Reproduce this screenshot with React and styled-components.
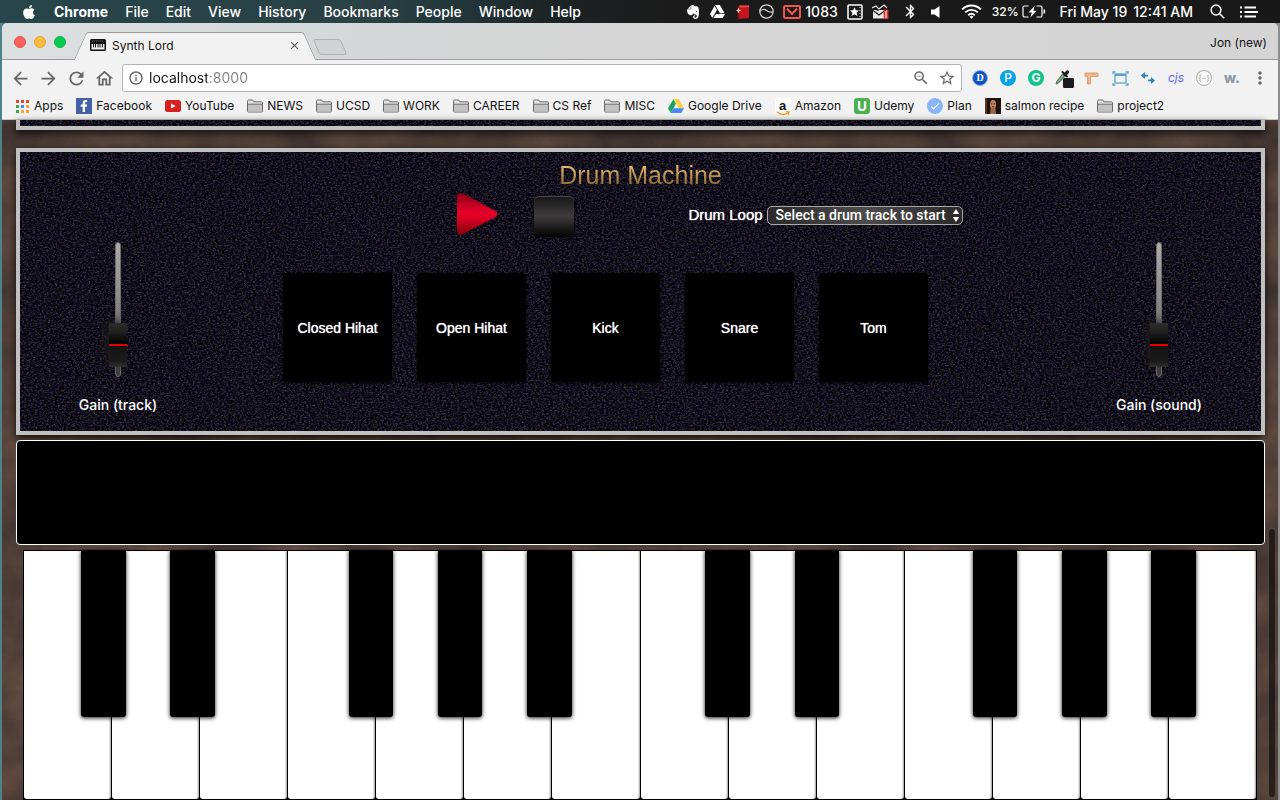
import React, { useState } from "react";
import styled, { createGlobalStyle, css } from "styled-components";
import { FaApple, FaEvernote, FaGoogleDrive, FaFacebookF } from "react-icons/fa";
import {
  MdArrowBack,
  MdArrowForward,
  MdRefresh,
  MdOutlineHome,
  MdInfoOutline,
  MdStarBorder,
  MdZoomOut,
  MdMoreVert,
  MdBluetooth,
  MdClose,
  MdCheck,
} from "react-icons/md";

const UI = `Inter, "Liberation Sans", sans-serif`;
const HELV = `"Liberation Sans", Arial, sans-serif`;

const svgUrl = (body, w, h) =>
  `url("data:image/svg+xml,${encodeURIComponent(
    `<svg xmlns='http://www.w3.org/2000/svg' width='${w}' height='${h}'>${body}</svg>`
  )}")`;

const leather = svgUrl(
  `<filter id='n' x='0' y='0' width='100%' height='100%' color-interpolation-filters='sRGB'><feTurbulence type='fractalNoise' baseFrequency='0.45 0.6' numOctaves='4' seed='4' stitchTiles='stitch'/><feColorMatrix values='0.5 0.2 0 0 -0.28  0.5 0.1 0 0 -0.245  0.5 0 0.3 0 -0.29  0 0 0 0 1'/></filter><rect width='600' height='300' filter='url(#n)'/>`,
  600,
  300
);

const wood = svgUrl(
  `<filter id='n' x='0' y='0' width='100%' height='100%' color-interpolation-filters='sRGB'><feTurbulence type='fractalNoise' baseFrequency='0.015 0.02' numOctaves='7' seed='9' stitchTiles='stitch'/><feColorMatrix values='0.24 0 0 0 0.2  0.16 0 0 0 0.17  0.1 0 0 0 0.17  0 0 0 0 1'/></filter><rect width='640' height='680' filter='url(#n)'/>`,
  640,
  680
);

const GlobalStyle = createGlobalStyle`
  * { box-sizing: border-box; }
  body { margin: 0; background: #4d7f85; font-family: ${UI}; }
  button { font: inherit; color: inherit; border: 0; padding: 0; background: none; }
  a { color: inherit; text-decoration: none; }
  svg { display: block; flex: none; }
`;

const Desktop = styled.div`
  min-height: 100vh;
  display: flex;
  flex-direction: column;
  background: linear-gradient(90deg, #4d8289 50%, #8d8d8d 50%);
`;

/* ---------- menu bar ---------- */
const MenuBar = styled.header`
  height: 23px;
  display: flex;
  justify-content: space-between;
  align-items: center;
  padding: 0 22px 0 21px;
  color: #fff;
  font-size: 14px;
  font-weight: 500;
  white-space: nowrap;
  background: linear-gradient(90deg, #27454a 0%, #2a4145 28%, #22363a 36%, #1c2425 43%, #1b1b1b 52%, #181818 100%);
`;
const MenuList = styled.nav`
  display: flex;
  align-items: center;
  gap: 17px;
`;
const MenuItem = styled.button`
  font-weight: ${(p) => (p.$strong ? 700 : 500)};
`;
const StatusList = styled.div`
  display: flex;
  align-items: center;
`;
const Status = styled.span`
  display: flex;
  align-items: center;
  gap: ${(p) => p.$gap || 4}px;
  margin-left: ${(p) => p.$space}px;
  font-size: ${(p) => (p.$small ? 12 : 14)}px;
`;

/* ---------- browser chrome ---------- */
const Window = styled.div`
  flex: 1;
  margin: 0 2px;
  display: flex;
  flex-direction: column;
  border-radius: 5px 5px 0 0;
  overflow: hidden;
`;
const TabStrip = styled.div`
  height: 37px;
  display: flex;
  align-items: flex-end;
  padding: 0 11px 0 12px;
  border-bottom: 1px solid #9b9b9b;
  background: linear-gradient(90deg, #dce0e0 0%, #d3d8d8 25%, #d5d5d5 45%, #d4d4d4 100%);
  font-size: 12px;
  color: #111;
`;
const Lights = styled.div`
  display: flex;
  gap: 8px;
  margin: 0 14px 11px 0;
`;
const Light = styled.button`
  width: 12px;
  height: 12px;
  border-radius: 50%;
  background: ${(p) => p.$color};
  border: 1px solid ${(p) => p.$edge};
`;
const Tab = styled.div`
  position: relative;
  display: flex;
  align-items: center;
  width: 230px;
  height: 28px;
  margin-bottom: -1px;
  padding: 0 9px 2px 10px;
  &::before,
  &::after {
    content: "";
    position: absolute;
    top: 0;
    bottom: 0;
    width: 60%;
    background: #f2f2f2;
    border-top: 1px solid #9b9b9b;
  }
  &::before {
    left: 0;
    border-left: 1px solid #9b9b9b;
    border-top-left-radius: 3px;
    transform: skewX(-24deg);
  }
  &::after {
    right: 0;
    border-right: 1px solid #9b9b9b;
    border-top-right-radius: 3px;
    transform: skewX(24deg);
  }
`;
const TabBody = styled.div`
  position: relative;
  z-index: 1;
  flex: 1;
  display: flex;
  align-items: center;
  gap: 6px;
`;
const TabClose = styled.button`
  margin-left: auto;
  color: #555;
`;
const NewTab = styled.button`
  width: 28px;
  height: 16px;
  margin: 0 0 4px 6px;
  border: 1px solid #b0b0b0;
  border-radius: 3px;
  background: #d0d3d3;
  transform: skewX(22deg);
`;
const Profile = styled.button`
  margin: 0 0 8px auto;
  line-height: 16px;
  font-size: 12px;
`;

const Toolbar = styled.div`
  display: flex;
  align-items: center;
  padding: 4px 4px 0;
  background: #f2f2f2;
`;
const ToolButton = styled.button`
  width: 28px;
  height: 28px;
  display: flex;
  align-items: center;
  justify-content: center;
  color: #656565;
`;
const Omnibox = styled.div`
  flex: 1;
  height: 28px;
  margin: 0 4px;
  padding: 0 4px 0 5px;
  display: flex;
  align-items: center;
  gap: 5px;
  background: #fff;
  border: 1px solid #b3b3b3;
  border-radius: 3px;
  color: #616161;
`;
const Address = styled.input`
  flex: 1;
  min-width: 0;
  border: 0;
  outline: 0;
  padding: 0;
  font-family: ${UI};
  font-size: 14px;
  line-height: 20px;
  color: transparent;
  background: linear-gradient(90deg, #111 58px, #808080 58px);
  background-clip: text;
`;
const OmniButton = styled.button`
  width: 21px;
  display: flex;
  justify-content: center;
  color: #666;
`;

const Badge = styled.span`
  width: 16px;
  height: 16px;
  display: flex;
  align-items: center;
  justify-content: center;
  border-radius: 50%;
  background: ${(p) => p.$bg};
  color: ${(p) => p.$color || "#fff"};
  font: ${(p) => p.$font || `700 10px/16px ${UI}`};
  ${(p) =>
    p.$ring &&
    css`
      border: ${p.$ring};
    `}
`;
const Glyph = styled.span`
  color: ${(p) => p.$color};
  font: ${(p) => p.$font};
`;

const BookmarkBar = styled.nav`
  height: 28px;
  display: flex;
  align-items: center;
  gap: 13px;
  padding: 0 12px;
  background: #f2f2f2;
  border-bottom: 1px solid #c4c4c4;
  font-size: 12px;
  color: #111;
`;
const Bookmark = styled.a`
  display: flex;
  align-items: center;
  gap: 4px;
  white-space: nowrap;
`;
const Square = styled.span`
  width: 16px;
  height: 16px;
  display: flex;
  align-items: center;
  justify-content: center;
  border-radius: ${(p) => p.$radius || 0}px;
  background: ${(p) => p.$bg};
  color: #fff;
  font: 700 13px/16px ${UI};
`;
const AmazonMark = styled(Square)`
  display: grid;
  justify-items: center;
  color: #111;
  font: 700 13px/15px ${HELV};
  > * {
    grid-area: 1 / 1;
  }
  > span {
    padding-bottom: 3px;
  }
  > svg {
    align-self: end;
  }
`;

/* ---------- synth page ---------- */
const Page = styled.main`
  position: relative;
  flex: 1;
  padding: 0 13px 0 14px;
  color: #fff;
  background: #4c3d36 ${wood};
`;
const panel = css`
  border: 4px solid #c0c0c0;
  background: #0b0916 ${leather};
  box-shadow: 0 3px 8px rgba(0, 0, 0, 0.8);
`;
const PanelTail = styled.div`
  ${panel}
  height: 10px;
  border-top: 0;
  margin-bottom: 18px;
`;
const Machine = styled.section`
  ${panel}
  padding-top: 8px;
  margin-bottom: 5px;
`;
const Title = styled.h2`
  margin: 0 auto;
  width: max-content;
  font: 400 25px/30px ${HELV};
  color: transparent;
  background: linear-gradient(180deg, #e6b973 20%, #8a642b 90%);
  background-clip: text;
`;
const Board = styled.div`
  display: flex;
`;
const GainColumn = styled.label`
  flex: 0 0 ${(p) => p.$width}px;
  display: flex;
  flex-direction: column;
  align-items: center;
  gap: 18px;
  padding: 52px 0 16px;
  font: 500 14px/20px ${UI};
`;
const Fader = styled.input`
  appearance: none;
  writing-mode: vertical-lr;
  direction: rtl;
  width: 18px;
  height: 135px;
  margin: 0;
  background: none;
  &::-webkit-slider-runnable-track {
    width: 6px;
    height: 135px;
    border-radius: 3px;
    border: 1px solid #6d6d6d;
    background: linear-gradient(180deg, #aaa, #8c8c8c 40%, #3b3b3b);
  }
  &::-webkit-slider-thumb {
    appearance: none;
    width: 18px;
    height: 44px;
    margin-left: -7px;
    background: linear-gradient(
      180deg,
      #2c2c2c 0,
      #222 8px,
      #000 21px,
      #e80000 21px,
      #e80000 23px,
      #151515 23px,
      #1a1a1a 38px,
      #303030 44px
    );
    box-shadow: -5px -2px 8px rgba(28, 28, 28, 0.9);
  }
`;
const Center = styled.div`
  flex: 1;
  min-width: 0;
`;
const Transport = styled.div`
  display: flex;
  align-items: center;
  justify-content: center;
  height: 48px;
  padding-left: 147px;
  margin-bottom: 35px;
`;
const PlayButton = styled.button`
  margin-right: 36px;
`;
const StopButton = styled.button`
  width: 40px;
  height: 40px;
  margin: 4px 114px 0 0;
  border-radius: 5px;
  background: linear-gradient(180deg, #161616, #3e3c3d 50%, #060606);
  box-shadow: inset 0 1px 0 #4a4a4a, 0 1px 2px #000;
`;
const LoopLabel = styled.label`
  display: flex;
  align-items: center;
  gap: 4px;
  padding-top: 2px;
  font: 400 15px/20px ${HELV};
  text-shadow: 0 0 1px #fff;
  white-space: nowrap;
`;
const SelectWrap = styled.span`
  display: grid;
  align-items: center;
  justify-items: end;
  > * {
    grid-area: 1 / 1;
  }
  svg {
    margin-right: 3px;
    pointer-events: none;
  }
`;
const LoopSelect = styled.select`
  appearance: none;
  width: 196px;
  height: 19px;
  padding: 0 0 0 8px;
  border: 1px solid #a9a9a9;
  border-radius: 5px;
  color: #fff;
  font: 500 14px/17px Roboto, ${HELV};
  background: linear-gradient(90deg, #2a2a2a, #4b4b4b 50%, #2a2a2a);
`;
const Pads = styled.div`
  display: flex;
  justify-content: center;
  gap: 25px;
  padding-right: 62px;
`;
const Pad = styled.button`
  width: 109px;
  height: 109px;
  border-radius: 3px;
  background: #000;
  box-shadow: 0 1px 3px rgba(0, 0, 0, 0.8);
  font: 400 14px/20px ${HELV};
  text-shadow: 0 0 1px #fff;
`;
const Screen = styled.div`
  height: 105px;
  margin-bottom: 5px;
  border: 1px solid #fff;
  border-radius: 4px;
  background: #000;
`;
const Keyboard = styled.div`
  position: relative;
  display: flex;
  height: 250px;
  margin: 0 8px 0 7px;
  padding-left: 1px;
  background: #000;
`;
const WhiteKey = styled.button`
  flex: 1;
  margin: 1px 1px 1px 0;
  border-radius: 0 0 3px 3px;
  background: #fff;
  box-shadow: inset -2px 0 2px -1px rgba(0, 0, 0, 0.4);
`;
const BlackKeys = styled.div`
  position: absolute;
  inset: 0 39px auto 36px;
  display: grid;
  grid-template-columns: repeat(13, 1fr);
  justify-items: center;
`;
const BlackKey = styled.button`
  grid-column: ${(p) => p.$slot};
  width: 50%;
  height: 167px;
  border-radius: 0 0 3px 3px;
  background: #000;
  box-shadow: 0 1px 4px rgba(0, 0, 0, 0.9);
`;
const ScrollThumb = styled.div`
  position: absolute;
  right: 2px;
  bottom: 2px;
  width: 8px;
  height: 270px;
  border-radius: 4px;
  border: 1px solid rgba(120, 110, 105, 0.5);
  background: rgba(0, 0, 0, 0.55);
`;

/* ---------- drawings ---------- */
const Folder = () => (
  <svg width="16" height="14" viewBox="0 0 16 14" fill="none" stroke="#6a6a6a">
    <path d="M.5 12V2.2C.5 1.3 1 1 1.6 1h3.6c.6 0 .9.3 1.2 1l.4.8h7.6c.7 0 1.1.4 1.1 1.1V12c0 .8-.3 1-1 1h-13c-.7 0-1-.3-1-1z" fill="#e3e3e3" />
    <path d="M1 5.5h14V12.5H1z" fill="#c2c2c2" stroke="none" />
    <path d="M.5 5.2h15" />
  </svg>
);
const AppsGrid = () => {
  const c = ["#ea4335", "#ea4335", "#ea4335", "#34a853", "#4285f4", "#f6a623", "#34a853", "#f6a623", "#f6a623"];
  return (
    <svg width="16" height="14" viewBox="0 0 16 14">
      {c.map((f, i) => (
        <rect key={i} x={2 + (i % 3) * 5} y={Math.floor(i / 3) * 5 + 1} width="3" height="3" fill={f} />
      ))}
    </svg>
  );
};
const YouTube = () => (
  <svg width="16" height="12" viewBox="0 0 16 12">
    <rect width="16" height="12" rx="2.5" fill="#d5221f" />
    <path d="M6.2 3.4v5.2L10.6 6z" fill="#fff" />
  </svg>
);
const DriveColor = () => (
  <svg width="16" height="14" viewBox="0 0 16 14">
    <path d="M5.4 0 0 9.3 2.7 14 8 4.6z" fill="#1da462" />
    <path d="M5.4 0h5.3L16 9.3h-5.3z" fill="#ffcf48" />
    <path d="M5.4 9.3H16L13.3 14H2.7z" fill="#4688f4" />
  </svg>
);
const Amazon = () => (
  <AmazonMark $bg="#fff" $radius={2}>
    <span>a</span>
    <svg width="14" height="5" viewBox="0 0 14 5" fill="none" stroke="#f79400" strokeWidth="1.4">
      <path d="M.8.8c3.500 3 8 3.200 11 1.200" />
      <path d="M10.200.8h3L12.300 3.600" strokeWidth="1.200" />
    </svg>
  </AmazonMark>
);
const Face = () => (
  <svg width="16" height="16" viewBox="0 0 16 16">
    <rect width="16" height="16" fill="#1c100c" />
    <rect width="2" height="16" fill="#5c331b" />
    <ellipse cx="8" cy="6.5" rx="3.1" ry="4.5" fill="#b9805f" />
    <path d="M5.6 10 5 16h6l-.6-6z" fill="#9a6346" />
    <path d="M6 5.8h1.4M8.8 5.8h1.3M7 8.8h2" stroke="#40201a" strokeWidth=".8" />
  </svg>
);
const PianoIcon = () => (
  <svg width="16" height="12" viewBox="0 0 16 12">
    <rect width="16" height="12" rx="1.5" fill="#111" />
    <path d="M2 2h12" stroke="#777" strokeDasharray="1 1" />
    <rect x="1.5" y="5" width="13" height="5.5" fill="#eee" />
    <path d="M3.5 5v3.4M5.5 5v3.4M8 5v3.4M10 5v3.4M12.4 5v3.4" stroke="#111" />
  </svg>
);
const RedBook = () => (
  <svg width="14" height="16" viewBox="0 0 14 16">
    <path d="M3 1.5h10v12.500L3 15z" fill="#c8141e" />
    <path d="M3 1.500h10v1.500L3 3.500z" fill="#ee4b4b" />
    <path d="M1.500 2.500 3.500 1.500V15l-2-1z" fill="#8a0d14" />
    <path d="m2.500 3.500.8 2.300 2.200.7-2.200.8-.8 2.200-.8-2.200L0 6.500l1.700-.7z" fill="#ffe9a8" />
  </svg>
);
const WaveCircle = () => (
  <svg width="15" height="15" viewBox="0 0 15 15" fill="none" stroke="#d9d9d9" strokeWidth="1.2">
    <circle cx="7.5" cy="7.5" r="6.7" />
    <path d="M1 7.500C2.500 5.200 5.500 4.800 7.500 6.500 9.500 8.200 11.600 8.400 14 8" />
  </svg>
);
const Mail = () => (
  <svg width="18" height="14" viewBox="0 0 18 14" fill="none" stroke="#f0564a" strokeWidth="2" strokeLinejoin="round">
    <rect x="1" y="1" width="16" height="12" rx="1.5" />
    <path d="M4 3.500 9 9l5-5.500" />
  </svg>
);
const StarBox = () => (
  <svg width="16" height="16" viewBox="0 0 16 16">
    <rect x="1" y="1" width="14" height="14" rx="1" fill="none" stroke="#fff" strokeWidth="1.500" />
    <path d="m7.500 3.300 1.300 3 3.200.3-2.400 2.100.7 3.200-2.800-1.700-2.800 1.700.7-3.200L3 6.600l3.200-.3z" fill="#fff" />
    <path d="M13 3v10" stroke="#fff" strokeDasharray="1 2" />
  </svg>
);
const MailBoxIcon = () => (
  <svg width="18" height="16" viewBox="0 0 18 16">
    <path d="M1 6h14v8.500H1z" fill="#e8e8e8" />
    <path d="m1 6.500 6 4.500 7-5M1 2.500l5 4 4-5 4 3" fill="none" stroke="#1b1b1b" strokeWidth="1.200" />
    <path d="m0 4 4-2 3 3 5-4 3 3" fill="none" stroke="#e8e8e8" strokeWidth="1.200" />
    <path d="M12.500 5.500V15M15.500 5.500V15" stroke="#e2332d" strokeWidth="1.800" />
  </svg>
);
const Speaker = () => (
  <svg width="11" height="14" viewBox="0 0 11 14">
    <path d="M1 4.500h3.500L9.500 1v12L4.500 9.500H1z" fill="#fff" />
  </svg>
);
const Wifi = () => (
  <svg width="21" height="15" viewBox="0 0 21 15" fill="none" stroke="#fff" strokeWidth="1.900">
    <path d="M1.200 5.400a13 13 0 0 1 18.600 0M4.200 8.400a9 9 0 0 1 12.600 0M7.200 11.300a5 5 0 0 1 6.600 0" />
    <path d="m10.500 14.800-1.900-2.100a2.800 2.800 0 0 1 3.800 0z" fill="#fff" stroke="none" />
  </svg>
);
const Battery = () => (
  <svg width="24" height="13" viewBox="0 0 24 13" fill="none" stroke="#fff" strokeWidth="1.200">
    <path d="M6.500 1H2.600C1.600 1 1 1.600 1 2.600v7.800c0 1 .6 1.600 1.600 1.600h3.900M14.500 1h4c1 0 1.500.6 1.500 1.600v7.800c0 1-.5 1.600-1.500 1.600h-4" />
    <path d="M22.300 4.500v4" strokeWidth="1.600" />
    <path d="M12.800.8 6.500 7.500h3.400L8.300 12.400l6.300-6.700h-3.400z" fill="#fff" stroke="none" />
  </svg>
);
const Search = () => (
  <svg width="15" height="15" viewBox="0 0 15 15" fill="none" stroke="#fff" strokeWidth="1.500">
    <circle cx="6" cy="6" r="4.900" />
    <path d="m9.600 9.600 4.600 4.600" />
  </svg>
);
const ListIcon = () => (
  <svg width="18" height="12" viewBox="0 0 18 12" stroke="#fff" strokeWidth="1.800">
    <path d="M0 1.500h2M0 6h2M0 10.500h2M4.500 1.500H16M4.500 6H18M4.500 10.500H16" />
  </svg>
);
const Dropper = () => (
  <svg width="20" height="20" viewBox="0 0 20 20">
    <path d="M8.500 6 11 8.500 4.500 15 2 16l1-3z" fill="#7da185" stroke="#3e5c46" strokeWidth=".8" />
    <path d="m8.500 4 4.500 4.500" stroke="#1d1d1d" strokeWidth="2" strokeLinecap="round" />
    <path d="M11 6.500 13.500 4" stroke="#1d1d1d" strokeWidth="3.400" strokeLinecap="round" />
    <rect x="9" y="10" width="11" height="10" rx="1.500" fill="#1b1b1f" />
  </svg>
);
const Ruler = () => (
  <svg width="16" height="16" viewBox="0 0 16 16" fill="#f3bd95" stroke="#d39467" strokeWidth=".8">
    <path d="M1 3h13v3.500H6.500V14h-3V6.500H1z" />
    <path d="M2.500 3v1.500M4.500 3v1.500M8 3v1.500M10 3v1.500M12 3v1.500M3.500 8.500H5M3.500 10.500H5M3.500 12.500H5" />
  </svg>
);
const Frame = () => (
  <svg width="17" height="15" viewBox="0 0 17 15" fill="none" stroke="#5ba4cb" strokeWidth="1.300">
    <rect x="3" y="3" width="11" height="9" />
    <path d="M3 4h11" strokeWidth="1.800" />
    <path d="M1 3V1h2.500M13.500 1H16v2M16 12v2h-2.500M3.500 14H1v-2" />
  </svg>
);
const Swap = () => (
  <svg width="14" height="12" viewBox="0 0 14 12" fill="#2a82b2">
    <path d="M4 0v2.800h3v1.600H4V7L0 3.600z" />
    <path d="M10 5v2.600H7v1.600h3V12l4-3.500z" />
  </svg>
);
const PlayShape = () => (
  <svg width="41" height="44" viewBox="0 0 41 46" preserveAspectRatio="none">
    <linearGradient id="play" x1="0" y1="0" x2="0" y2="1">
      <stop offset="0" stopColor="#8d0014" />
      <stop offset=".45" stopColor="#e4002b" />
      <stop offset=".6" stopColor="#dc0020" />
      <stop offset="1" stopColor="#7c0010" />
    </linearGradient>
    <path d="M0 5.500C0 1.500 3 0 6 1.500l32 18c3.200 2 3.200 5 0 7l-32 17.800C3 46 0 44.500 0 40.500z" fill="url(#play)" />
  </svg>
);
const UpDown = () => (
  <svg width="8" height="13" viewBox="0 0 8 13" fill="#fff">
    <path d="M4 0 7.200 5H.8zM4 13 .8 8h6.400z" />
  </svg>
);

const MENUS = ["File", "Edit", "View", "History", "Bookmarks", "People", "Window", "Help"];
const BOOKMARKS = [
  ["Apps", <AppsGrid />],
  ["Facebook", <Square $bg="#4660a5"><FaFacebookF size={12} /></Square>],
  ["YouTube", <YouTube />],
  ["NEWS", <Folder />],
  ["UCSD", <Folder />],
  ["WORK", <Folder />],
  ["CAREER", <Folder />],
  ["CS Ref", <Folder />],
  ["MISC", <Folder />],
  ["Google Drive", <DriveColor />],
  ["Amazon", <Amazon />],
  ["Udemy", <Square $bg="#4caf50" $radius={3}>U</Square>],
  ["Plan", <Badge $bg="#8ab4f8"><MdCheck size={12} /></Badge>],
  ["salmon recipe", <Face />],
  ["project2", <Folder />],
];
const EXTENSIONS = [
  ["Dashlane", <Badge $bg="#0f52c0" $ring="1px solid #8db1e8" $font={`700 10px/14px "Liberation Serif", serif`}>D</Badge>],
  ["Pandora", <Badge $bg="#0aa3e6" $font={`500 12px/16px ${UI}`}>P</Badge>],
  ["Grammarly", <Badge $bg="#12c28b" $font={`700 12px/16px ${UI}`}>G</Badge>],
  ["Color picker", <Dropper />],
  ["Ruler", <Ruler />],
  ["Resize", <Frame />],
  ["Swap", <Swap />],
  ["cjs", <Glyph $color="#5b62f0" $font={`italic 400 12px/16px ${UI}`}>cjs</Glyph>],
  ["JSON", <Badge $bg="#f8f8f8" $color="#999" $ring="1px solid #aaa" $font={`400 8px/12px ${UI}`}>{"{··}"}</Badge>],
  ["Wappalyzer", <Glyph $color="#8b9ba3" $font={`800 14px/16px ${UI}`}>w.</Glyph>],
  ["Menu", <MdMoreVert size={20} />],
];
const PADS = ["Closed Hihat", "Open Hihat", "Kick", "Snare", "Tom"];
const WHITE = ["C", "D", "E", "F", "G", "A", "B", "C2", "D2", "E2", "F2", "G2", "A2", "B2"];
const BLACK_SLOTS = [1, 2, 4, 5, 6, 8, 9, 11, 12, 13];

function Gain({ name, width }) {
  const [value, setValue] = useState(10);
  return (
    <GainColumn $width={width}>
      <Fader type="range" min="0" max="100" value={value} onChange={(e) => setValue(e.target.value)} />
      {name}
    </GainColumn>
  );
}

export default function App() {
  const [url, setUrl] = useState("localhost:8000");
  return (
    <Desktop>
      <GlobalStyle />
      <MenuBar>
        <MenuList>
          <FaApple size={16} />
          <MenuItem $strong>Chrome</MenuItem>
          {MENUS.map((m) => (
            <MenuItem key={m}>{m}</MenuItem>
          ))}
        </MenuList>
        <StatusList>
          <Status $space={0}><FaEvernote size={16} /></Status>
          <Status $space={9}><FaGoogleDrive size={15} /></Status>
          <Status $space={11}><RedBook /></Status>
          <Status $space={9}><WaveCircle /></Status>
          <Status $space={9}><Mail />1083</Status>
          <Status $space={9}><StarBox /></Status>
          <Status $space={9}><MailBoxIcon /></Status>
          <Status $space={12}><MdBluetooth size={17} /></Status>
          <Status $space={11}><Speaker /></Status>
          <Status $space={20}><Wifi /></Status>
          <Status $space={10} $small $gap={3}>32%<Battery /></Status>
          <Status $space={14} $gap={6}><span>Fri May 19</span><span>12:41 AM</span></Status>
          <Status $space={17}><Search /></Status>
          <Status $space={15}><ListIcon /></Status>
        </StatusList>
      </MenuBar>

      <Window>
        <TabStrip>
          <Lights>
            <Light aria-label="Close" $color="#fc605c" $edge="#e5514c" />
            <Light aria-label="Minimize" $color="#fdbc40" $edge="#e3a436" />
            <Light aria-label="Zoom" $color="#05cb4e" $edge="#11b146" />
          </Lights>
          <Tab>
            <TabBody>
              <PianoIcon />
              Synth Lord
              <TabClose aria-label="Close tab"><MdClose size={13} /></TabClose>
            </TabBody>
          </Tab>
          <NewTab aria-label="New tab" />
          <Profile>Jon (new)</Profile>
        </TabStrip>

        <Toolbar>
          <ToolButton aria-label="Back"><MdArrowBack size={21} /></ToolButton>
          <ToolButton aria-label="Forward"><MdArrowForward size={21} /></ToolButton>
          <ToolButton aria-label="Reload"><MdRefresh size={21} /></ToolButton>
          <ToolButton aria-label="Home"><MdOutlineHome size={21} /></ToolButton>
          <Omnibox>
            <MdInfoOutline size={16} />
            <Address aria-label="Address" value={url} onChange={(e) => setUrl(e.target.value)} />
            <OmniButton aria-label="Zoom out"><MdZoomOut size={18} /></OmniButton>
            <OmniButton aria-label="Bookmark this page"><MdStarBorder size={18} /></OmniButton>
          </Omnibox>
          {EXTENSIONS.map(([name, icon]) => (
            <ToolButton key={name} aria-label={name}>{icon}</ToolButton>
          ))}
        </Toolbar>
        <BookmarkBar>
          {BOOKMARKS.map(([name, icon]) => (
            <Bookmark key={name} href="#">{icon}{name}</Bookmark>
          ))}
        </BookmarkBar>

        <Page>
          <PanelTail />
          <Machine>
            <Title>Drum Machine</Title>
            <Board>
              <Gain name="Gain (track)" width={196} />
              <Center>
                <Transport>
                  <PlayButton aria-label="Play"><PlayShape /></PlayButton>
                  <StopButton aria-label="Stop" />
                  <LoopLabel>
                    Drum Loop
                    <SelectWrap>
                      <LoopSelect>
                        <option>Select a drum track to start</option>
                      </LoopSelect>
                      <UpDown />
                    </SelectWrap>
                  </LoopLabel>
                </Transport>
                <Pads>
                  {PADS.map((p) => (
                    <Pad key={p}>{p}</Pad>
                  ))}
                </Pads>
              </Center>
              <Gain name="Gain (sound)" width={204} />
            </Board>
          </Machine>
          <Screen />
          <Keyboard>
            {WHITE.map((k) => (
              <WhiteKey key={k} aria-label={k} />
            ))}
            <BlackKeys>
              {BLACK_SLOTS.map((s) => (
                <BlackKey key={s} $slot={s} aria-label={`Sharp ${s}`} />
              ))}
            </BlackKeys>
          </Keyboard>
          <ScrollThumb />
        </Page>
      </Window>
    </Desktop>
  );
}
